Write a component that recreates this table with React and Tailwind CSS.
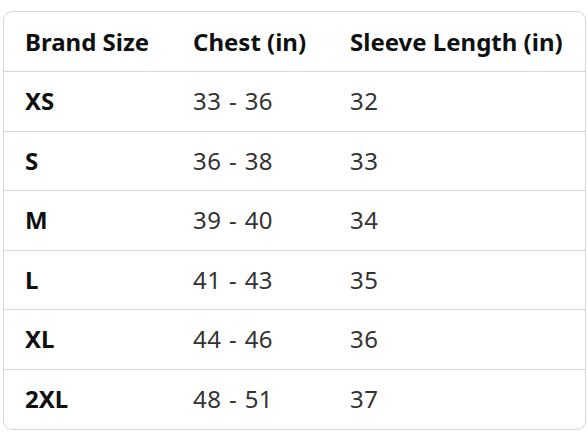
import React from "react";

const rows = [
  ["XS", "33 - 36", "32"],
  ["S", "36 - 38", "33"],
  ["M", "39 - 40", "34"],
  ["L", "41 - 43", "35"],
  ["XL", "44 - 46", "36"],
  ["2XL", "48 - 51", "37"],
];

export default function App() {
  return (
    <div className="w-[588px] h-[441px] bg-white pt-[11px] pl-[3px]" style={{ fontFamily: '"Noto Sans", sans-serif' }}>
      <div className="w-[583px] border border-[#d5d9d9] rounded-[9px] overflow-hidden">
        <div className="grid grid-cols-[168px_157px_1fr] h-[60px] items-center border-b border-[#d5d9d9] text-[24px] font-bold text-[#0f1111]">
          <div className="pl-[21px]">Brand Size</div>
          <div className="pl-[21px]">Chest (in)</div>
          <div className="pl-[21px]">Sleeve Length (in)</div>
        </div>
        {rows.map((r, i) => (
          <div
            key={r[0]}
            className={`grid grid-cols-[168px_157px_1fr] h-[59.5px] items-center text-[24px] ${i < rows.length - 1 ? "border-b border-[#d5d9d9]" : ""}`}
          >
            <div className="pl-[21px] font-bold text-[#0f1111]">{r[0]}</div>
            <div className="pl-[21px] text-[#333333] tracking-[0.4px] [word-spacing:1px]">{r[1]}</div>
            <div className="pl-[21px] text-[#333333] tracking-[0.4px]">{r[2]}</div>
          </div>
        ))}
      </div>
    </div>
  );
}
